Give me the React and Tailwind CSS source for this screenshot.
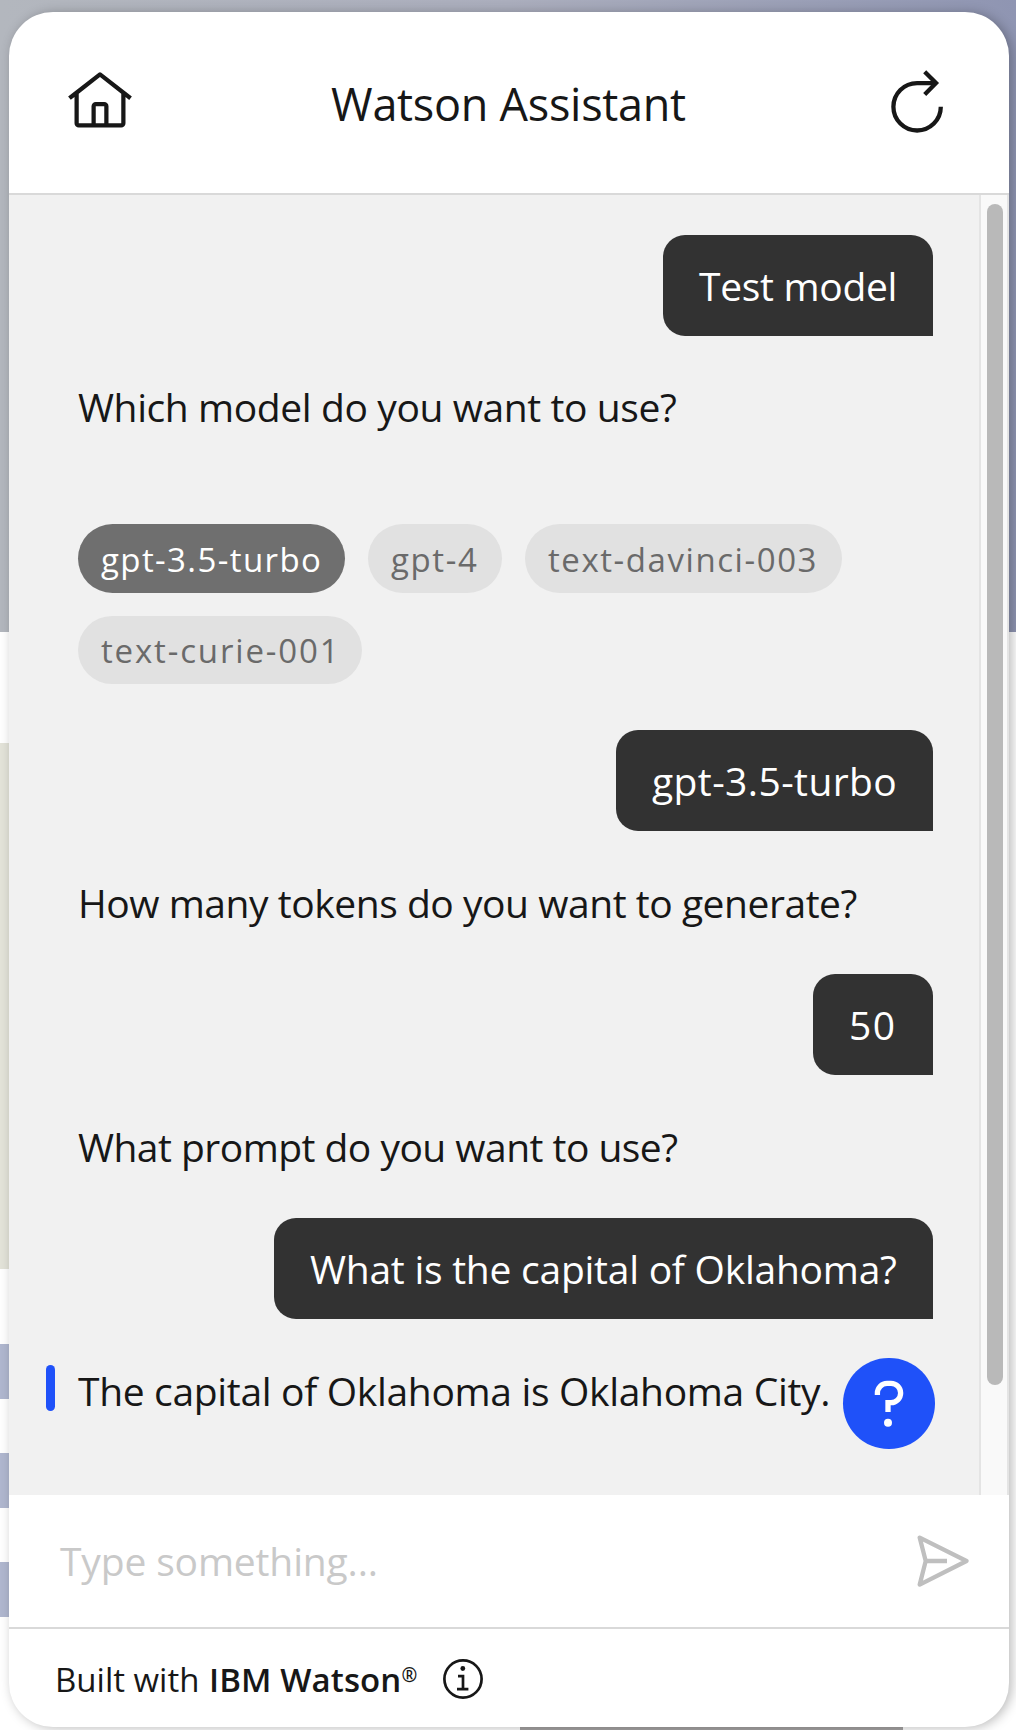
import React from "react";

function HomeIcon() {
  return (
    <svg className="-mt-px size-[68px]" viewBox="0 0 32 32" fill="#171717">
      <path d="M16.6123,2.2138a1.01,1.01,0,0,0-1.2427,0L1,13.4194l1.2427,1.5717L4,13.6208V26a2.0041,2.0041,0,0,0,2,2H26a2.0037,2.0037,0,0,0,2-2V13.63L29.7573,15,31,13.4282ZM18,26H14V18h4Zm2,0V18a2.0023,2.0023,0,0,0-2-2H14a2.002,2.002,0,0,0-2,2v8H6V12.0615l10-7.79,10,7.8005V26Z" />
    </svg>
  );
}

function RestartIcon() {
  return (
    <svg className="size-[68px]" viewBox="0 0 68 68" fill="none" stroke="#171717" strokeWidth="4.3">
      <path d="M57.8 37.8A23.7 23.7 0 1 1 34.1 14.1H52" />
      <path d="M41.7 2.8L53 14.1L41.7 25.4" />
    </svg>
  );
}

function HelpIcon() {
  return (
    <svg className="h-[91px] w-[92px]" viewBox="0 0 92 91" fill="none" stroke="#fff" strokeWidth="5.3">
      <path d="M34.4 37v-1.9A9.65 9.65 0 0 1 44 25.4h4a9.65 9.65 0 0 1 0 19.3h-3v9.2" />
      <circle cx="45" cy="64.7" r="4" fill="#fff" stroke="none" />
    </svg>
  );
}

function SendIcon() {
  return (
    <svg
      className="h-[54px] w-[54px]"
      viewBox="0 0 54 54"
      fill="none"
      stroke="#bfbfbf"
      strokeWidth="4.3"
      strokeLinejoin="round"
    >
      <path d="M4.7 3.6L51.5 27L4.7 50.6L10.7 27Z" />
      <path d="M10.7 27H32" />
    </svg>
  );
}

function InfoIcon() {
  return (
    <svg className="size-10" viewBox="0 0 40 40" fill="none" stroke="#171717" strokeWidth="2.7">
      <circle cx="20" cy="20" r="18.6" />
      <path d="M15 17.2h5v13M14 30.2h11.4" />
      <circle cx="19.8" cy="9.5" r="2.4" fill="#171717" stroke="none" />
    </svg>
  );
}

function UserMessage({ className, children }) {
  return (
    <div
      className={`h-[101px] shrink-0 self-end whitespace-nowrap rounded-[22px] rounded-br-none bg-[#323232] pl-9 text-[39px] leading-[101px] text-white ${className}`}
    >
      {children}
    </div>
  );
}

function BotMessage({ className, children }) {
  return (
    <p className={`h-[52px] shrink-0 whitespace-nowrap text-[39px] leading-[52px] text-[#171717] ${className}`}>
      {children}
    </p>
  );
}

function Chip({ selected, className, children }) {
  return (
    <button
      className={`whitespace-nowrap rounded-full pl-[23px] pt-0.5 text-left text-[33px] ${
        selected ? "bg-[#6f6f6f] text-white" : "bg-[#e1e1e1] text-[#6a6a6a]"
      } ${className}`}
    >
      {children}
    </button>
  );
}

function Backdrop() {
  return (
    <div className="absolute inset-0 flex flex-col bg-white">
      <div className="h-[632px] bg-linear-to-r from-[#b3b7be] via-[#abaebd] to-[#8f95b2]" />
      <div className="mt-[111px] h-[526px] w-5 bg-[#e3e3d9]" />
      <div className="mt-[75px] h-[55px] w-5 bg-[#b0b7cf]" />
      <div className="mt-[54px] h-[55px] w-5 bg-[#b0b7cf]" />
      <div className="mt-[54px] h-[55px] w-5 bg-[#b0b7cf]" />
      <div className="ml-[520px] mt-auto h-2 w-[383px] bg-[#a6a4a4]" />
    </div>
  );
}

export default function App() {
  return (
    <div className="relative h-[1730px] w-[1016px] overflow-hidden px-[9px] pt-3 font-['Open_Sans',sans-serif]">
      <Backdrop />
      <div className="relative flex h-[1715px] w-[1000px] flex-col overflow-hidden rounded-[44px] bg-white shadow-[3px_1px_12px_rgba(0,0,0,0.27)]">
        <header className="flex h-[183px] shrink-0 items-center justify-between border-b-2 border-[#d9d9d9] pl-[57px] pr-[58px]">
          <HomeIcon />
          <h1 className="whitespace-nowrap pt-px text-[45px] leading-none tracking-[-0.28px] text-[#171717]">
            Watson Assistant
          </h1>
          <RestartIcon />
        </header>

        <main className="flex h-[1300px] shrink-0 bg-[#f1f1f1]">
          <div className="relative flex w-[970px] flex-col pl-[69px] pr-[46px] pt-10">
            <UserMessage className="w-[270px] tracking-[-0.3px]">Test model</UserMessage>
            <BotMessage className="mt-[45px] tracking-[-0.4px]">Which model do you want to use?</BotMessage>
            <div className="mt-[91px] flex shrink-0 flex-wrap gap-[23px]">
              <Chip selected className="h-[69px] w-[267px] tracking-[1.4px]">gpt-3.5-turbo</Chip>
              <Chip className="h-[69px] w-[134px] tracking-[1.6px]">gpt-4</Chip>
              <Chip className="h-[69px] w-[317px] tracking-[1.57px]">text-davinci-003</Chip>
              <Chip className="h-[68px] w-[284px] tracking-[1.85px]">text-curie-001</Chip>
            </div>
            <UserMessage className="mt-[46px] w-[317px] tracking-[0.4px]">gpt-3.5-turbo</UserMessage>
            <BotMessage className="mt-[46px] tracking-[-0.46px]">How many tokens do you want to generate?</BotMessage>
            <UserMessage className="mt-[45px] w-[120px] tracking-[1.5px]">50</UserMessage>
            <BotMessage className="mt-[46px] tracking-[-0.53px]">What prompt do you want to use?</BotMessage>
            <UserMessage className="mt-[45px] w-[659px] tracking-[-0.25px]">What is the capital of Oklahoma?</UserMessage>
            <div className="mt-[46px] flex">
              <span className="-ml-8 mr-[23px] h-[46px] w-[9px] rounded-full bg-[#1f51f9]" />
              <BotMessage className="tracking-[-0.33px]">The capital of Oklahoma is Oklahoma City.</BotMessage>
            </div>
            <button className="absolute bottom-[46px] right-11 rounded-full bg-[#1f51f9]">
              <HelpIcon />
            </button>
          </div>
          <div className="w-[30px] border-x-2 border-[#e4e4e4] bg-[#f9f9f9] pl-1.5 pt-[9px]">
            <div className="h-[1181px] w-4 rounded-full bg-[#b9b9b9]" />
          </div>
        </main>

        <div className="flex h-[134px] shrink-0 items-center justify-between border-b-2 border-[#d9d9d9] pl-[51px] pr-10">
          <span className="-mt-px text-[39px] leading-[52px] tracking-[-0.15px] text-[#c9c9c9]">Type something...</span>
          <SendIcon />
        </div>

        <footer className="flex grow items-center whitespace-nowrap pl-[46px] pt-[3px] text-[33px] leading-[44px] text-[#171717]">
          <span className="w-[154px]">Built with</span>
          <span className="w-[225px] font-semibold tracking-[0.1px]">
            IBM Watson<sup className="top-[-10px] text-[19px] leading-none">®</sup>
          </span>
          <span className="-mt-px ml-[9px]">
            <InfoIcon />
          </span>
        </footer>
      </div>
    </div>
  );
}
